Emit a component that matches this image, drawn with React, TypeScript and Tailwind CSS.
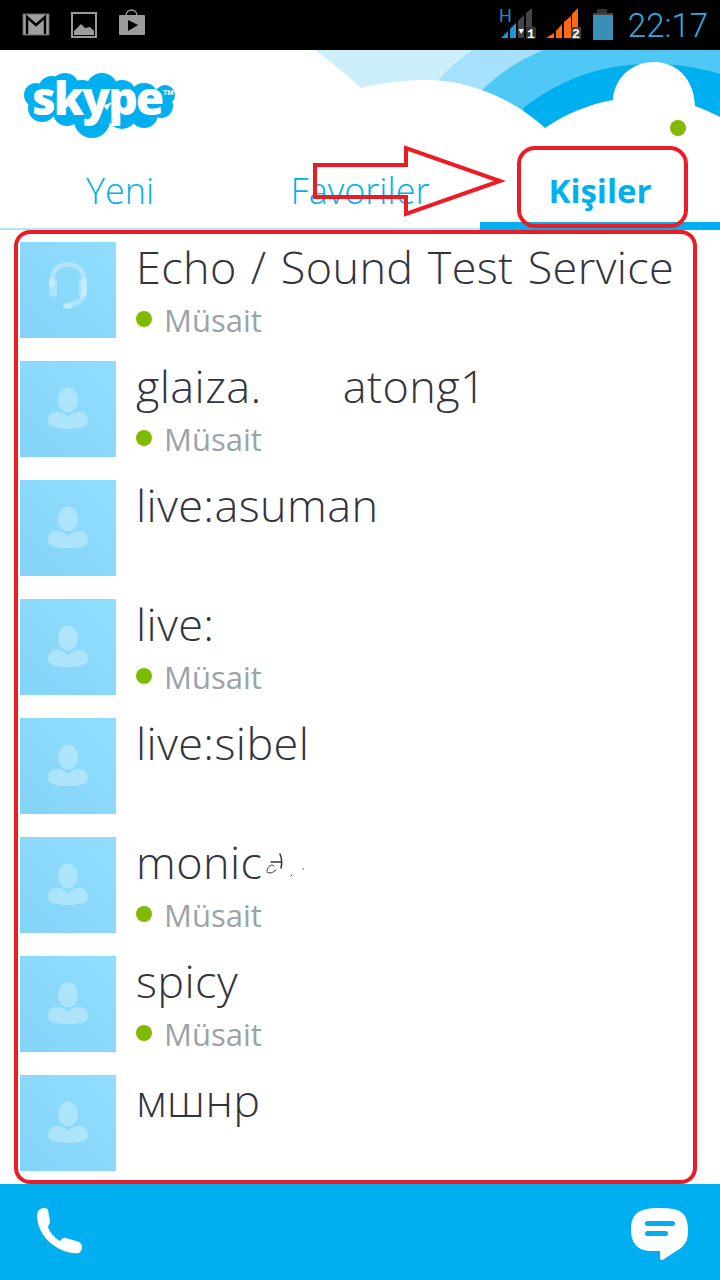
const contacts = [
  { name: 'Echo / Sound Test Service', online: true, icon: 'headset' },
  { name: 'glaiza.', suffix: 'atong1', online: true },
  { name: 'live:asuman', online: false },
  { name: 'live:', online: true },
  { name: 'live:sibel', online: false },
  { name: 'monic', online: true, smudge: true },
  { name: 'spicy', online: true },
  { name: 'мшнр', online: false },
];

function PersonIcon() {
  return (
    <svg viewBox="0 0 96 96" className="w-24 h-24">
      <g fill="#fff" fillOpacity="0.3">
        <ellipse cx="48" cy="39" rx="10" ry="12.5" />
        <path d="M48 56 C44 52 41 51 36 51 C31 51 28 54 28 61 C28 66 36 68 48 68 C60 68 68 66 68 61 C68 54 65 51 60 51 C55 51 52 52 48 56 Z" />
      </g>
    </svg>
  );
}

function HeadsetIcon() {
  return (
    <svg viewBox="0 0 96 96" className="w-24 h-24">
      <g fill="none" stroke="#fff" strokeOpacity="0.3" strokeLinecap="round">
        <path d="M32 42 V38 C32 17 64 17 64 38 V50 C64 58 58 61 47 64" strokeWidth="5" />
      </g>
      <g fill="#fff" fillOpacity="0.3">
        <rect x="29" y="36" width="8" height="19" rx="4" />
        <rect x="59" y="36" width="8" height="19" rx="4" />
        <rect x="43" y="61" width="9" height="6" rx="3" />
      </g>
    </svg>
  );
}

// leftover of the erased part of the name
function Smudge() {
  return (
    <svg width="40" height="26" viewBox="0 0 40 26" className="ml-[3px] mt-[8px] shrink-0">
      <g fill="none" stroke="#33343c" strokeLinecap="round">
        <path d="M6 9 H16 M15 1 C17 6 17 11 16 15" strokeWidth="1.5" />
        <path d="M2 18 C3 12 7 11 9 13 M2 19 C5 21 7 20 11 17" strokeWidth="1" />
        <path d="M26 23 L27 22" strokeWidth="1" />
        <path d="M38 16 L38.5 16" strokeWidth="1" />
      </g>
    </svg>
  );
}

function ContactRow({ contact }: { contact: (typeof contacts)[number] }) {
  return (
    <div className="flex h-[119px]">
      <div className="w-24 h-24 ml-5 shrink-0 bg-gradient-to-tr from-[#84d4f7] to-[#90deff]">
        {contact.icon === 'headset' ? <HeadsetIcon /> : <PersonIcon />}
      </div>
      <div className="ml-5 min-w-0">
        <div className="flex h-[52px] -mt-px items-center text-[45px] leading-[52px] font-light text-[#33343c] whitespace-nowrap tracking-[0.4px] [word-spacing:2px]">
          <span>{contact.name}</span>
          {contact.suffix && <span className="ml-[81px]">{contact.suffix}</span>}
          {contact.smudge && <Smudge />}
        </div>
        {contact.online && (
          <div className="flex items-center h-[36px] mt-[9px]">
            <span className="w-4 h-4 rounded-full bg-[#7fba00] -mt-[3px]" />
            <span className="ml-[12px] text-[31px] leading-[36px] text-[#9aa3aa]">Müsait</span>
          </div>
        )}
      </div>
    </div>
  );
}

function StatusBar() {
  return (
    <div className="h-[50px] bg-black flex items-center justify-between shrink-0">
      <svg width="160" height="50" viewBox="0 0 160 50">
        <rect x="23" y="14" width="26" height="21" fill="#a0a0a0" stroke="#666" />
        <path d="M27 34 V17 L36 25 L45 17 V34" fill="none" stroke="#000" strokeWidth="2.5" />
        <rect x="72" y="13" width="24" height="24" fill="#000" stroke="#999" strokeWidth="2" />
        <path d="M74 35 V31 L81 24 L85 28 L90 27 L94 31 V35 Z" fill="#9c9c9c" />
        <path d="M126 16 C126 8 137 8 137 16" fill="none" stroke="#9c9c9c" strokeWidth="1.5" />
        <rect x="119" y="15" width="26" height="20" rx="1" fill="#9c9c9c" />
        <path d="M128 20 L138 25 L128 31 Z" fill="#000" />
      </svg>
      <div className="flex items-center">
        <svg width="122" height="50" viewBox="0 0 122 50" className="mr-[7px]">
          <text x="0" y="22" fontSize="18" fill="#1f86c8" fontFamily="Roboto, sans-serif">H</text>
          <path d="M2 38 L9 31 V38 Z M11 29 L17 23 V38 H11 Z" fill="#1f94dc" />
          <path d="M19 21 L25 15 V38 H19 Z M27 13 L33 8 V38 H27 Z" fill="#444" />
          <path d="M19.5 29 H25 L22.2 34 Z" fill="#fff" />
          <rect x="27" y="27" width="10" height="12" fill="#333" />
          <text x="28" y="38" fontSize="13" fontWeight="700" fill="#fff" fontFamily="'Liberation Mono', monospace">1</text>
          <path d="M47 38 L55 33 V38 Z M57 31 L63 24 V38 H57 Z M65 22 L72 16 V38 H65 Z M73 14 L79 8 V38 H73 Z" fill="#ff6a13" />
          <rect x="72" y="27" width="10" height="12" fill="#444" />
          <text x="73" y="38" fontSize="13" fontWeight="700" fill="#fff" fontFamily="'Liberation Mono', monospace">2</text>
          <rect x="98" y="9" width="10" height="4" fill="#333" />
          <rect x="94" y="13" width="20" height="27" fill="#3a8fb7" />
          <rect x="94" y="13" width="20" height="2" fill="#444" />
        </svg>
        <span className="mr-[12px] text-[33px] leading-none font-light text-[#33a9dc] font-['Roboto',sans-serif]">22:17</span>
      </div>
    </div>
  );
}

function SkypeLogo() {
  return (
    <svg width="170" height="90" viewBox="0 -12 170 90" className="absolute left-[22px] top-[8px]">
      <g fill="#00aff0">
        <circle cx="14" cy="25" r="12" />
        <circle cx="30" cy="20" r="14" />
        <circle cx="43" cy="17" r="14" />
        <circle cx="60" cy="26" r="16" />
        <circle cx="80" cy="19" r="16" />
        <circle cx="100" cy="24" r="14" />
        <circle cx="122" cy="28" r="15" />
        <circle cx="143" cy="25" r="10" />
        <circle cx="20" cy="38" r="14" />
        <circle cx="45" cy="42" r="14" />
        <circle cx="70" cy="50" r="18" />
        <circle cx="100" cy="44" r="15" />
        <circle cx="122" cy="44" r="14" />
        <circle cx="139" cy="36" r="12" />
      </g>
      <text x="10" y="45" fontSize="46" fontWeight="800" fill="#fff" letterSpacing="-2" fontFamily="'Open Sans', sans-serif">skype</text>
      <text x="141" y="25" fontSize="7" fontWeight="700" fill="#fff" fontFamily="'Open Sans', sans-serif">TM</text>
    </svg>
  );
}

function HeaderArt() {
  return (
    <svg width="720" height="180" viewBox="0 50 720 180" className="absolute left-0 top-0">
      <path d="M315 50 C345 72 390 110 420 160 H720 V50 Z" fill="#cdeefb" />
      <path d="M473 50 C455 62 440 75 425 100 L600 160 H720 V50 Z" fill="#a5e1fa" />
      <path d="M543 50 C520 60 500 72 480 92 L600 160 H720 V50 Z" fill="#50c8f5" />
      <path d="M523 108 C560 80 600 64 650 64 C680 64 700 68 720 74 V160 H540 Z" fill="#00aff0" />
      <path d="M0 230 V160 L300 110 C340 90 385 80 427 80 C470 80 515 100 545 128 C565 114 590 104 613 100 C614 78 632 62 654 62 C676 62 694 78 695 106 C704 109 712 113 720 117 V230 Z" fill="#fff" />
    </svg>
  );
}

function Header() {
  return (
    <div className="relative h-[180px] bg-white shrink-0 overflow-hidden">
      <HeaderArt />
      <SkypeLogo />
      <span className="absolute left-[670px] top-[70px] w-4 h-4 rounded-full bg-[#7fba00]" />
      <div className="absolute inset-x-0 bottom-0 grid grid-cols-3 h-[76px] border-b-[2px] border-[#b3e5f8] text-[#00aff0] text-[36px] leading-[74px]">
        <span className="text-center font-light">Yeni</span>
        <span className="text-center font-light">Favoriler</span>
        <span className="h-[76px] text-center text-[33px] font-bold border-b-[8px] border-[#00aff0]">Kişiler</span>
      </div>
    </div>
  );
}

function BottomBar() {
  return (
    <div className="h-24 bg-[#00aff0] flex items-center justify-between shrink-0 pl-[37px] pr-[32px]">
      <svg width="46" height="46" viewBox="0 0 46 46" className="mb-[2px]">
        <path d="M2 2 C4 0 9 -1 11 2 L13 13 C13 16 11 18 11 19 C13 25 18 30 23 33 C24 33 25 29 29 30 L42 34 C46 36 46 42 42 45 C25 47 1 32 0 8 C0 5 1 3 2 2 Z" fill="#fff" />
      </svg>
      <svg width="57" height="52" viewBox="0 0 57 52" className="mt-[4px]">
        <path d="M28 0 C46 0 57 2 57 22 C57 32 55 35 50 40 L33 51 C31 53 29 52 29 49 V43 H20 C6 43 0 34 0 22 C0 4 10 0 28 0 Z" fill="#fff" />
        <rect x="14" y="13" width="30" height="5" rx="2.5" fill="#00aff0" />
        <rect x="14" y="23" width="23" height="5" rx="2.5" fill="#00aff0" />
      </svg>
    </div>
  );
}

function Annotations() {
  return (
    <>
      <div className="absolute left-[14px] top-[230px] w-[683px] h-[954px] border-[4px] border-[#ed1c24] rounded-[16px]" />
      <div className="absolute left-[517px] top-[146px] w-[171px] h-[82px] border-[4px] border-[#ed1c24] rounded-[18px]" />
      <svg width="200" height="80" viewBox="310 142 200 80" className="absolute left-[310px] top-[142px]">
        <path d="M315 165 H406 V148 L500 181 L406 214 V197 H315 Z" fill="none" stroke="#ed1c24" strokeWidth="4" />
      </svg>
    </>
  );
}

export default function App() {
  return (
    <div className="relative w-[720px] h-[1280px] flex flex-col bg-white overflow-hidden font-['Open_Sans',sans-serif]">
      <StatusBar />
      <Header />
      <div className="flex-1 min-h-0 pt-3 overflow-hidden">
        {contacts.map((contact) => (
          <ContactRow key={contact.name} contact={contact} />
        ))}
      </div>
      <BottomBar />
      <Annotations />
    </div>
  );
}
